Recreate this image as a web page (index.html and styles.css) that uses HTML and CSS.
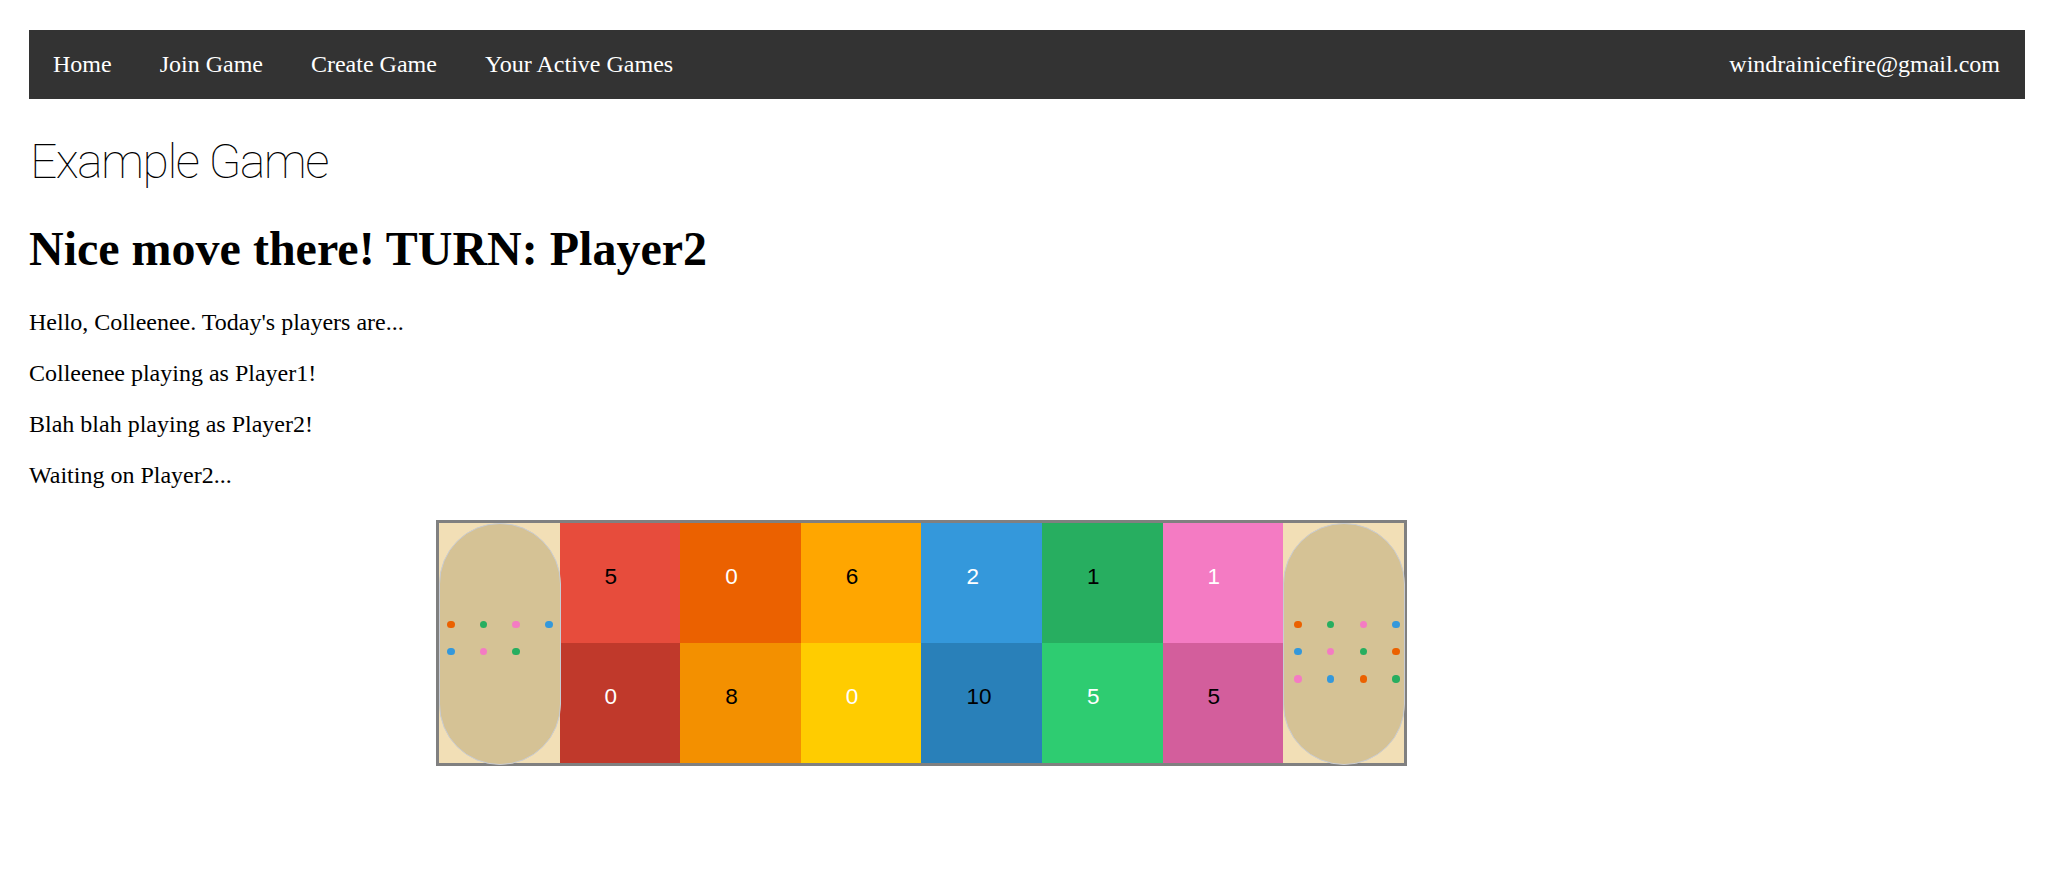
FILE: index.html
```html
<!DOCTYPE html>
<html lang="en">
<head>
<meta charset="utf-8">
<title>Example Game</title>
<link rel="stylesheet" href="styles.css">
</head>
<body>
<div class="page">
  <nav class="topnav">
    <div class="links">
      <a class="navlink" href="#">Home</a>
      <a class="navlink" href="#">Join Game</a>
      <a class="navlink" href="#">Create Game</a>
      <a class="navlink" href="#">Your Active Games</a>
    </div>
    <a class="navlink user" href="#">windrainicefire@gmail.com</a>
  </nav>

  <div class="title">Example Game</div>
  <h1 class="status">Nice move there! TURN: Player2</h1>
  <p class="msg">Hello, Colleenee. Today's players are...</p>
  <p class="msg">Colleenee playing as Player1!</p>
  <p class="msg">Blah blah playing as Player2!</p>
  <p class="msg">Waiting on Player2...</p>

  <div class="board-wrap">
    <div class="board">
      <div class="store">
        <div class="pill">
          <div class="dots dots-left">
            <span class="dot c-orange"></span><span class="dot c-green"></span><span class="dot c-pink"></span><span class="dot c-blue"></span>
            <span class="dot c-blue"></span><span class="dot c-pink"></span><span class="dot c-green"></span>
          </div>
        </div>
      </div>
      <div class="pits">
        <div class="pit p-red txt-dark">5</div>
        <div class="pit p-dorange txt-light">0</div>
        <div class="pit p-orange txt-dark">6</div>
        <div class="pit p-blue txt-light">2</div>
        <div class="pit p-green txt-dark">1</div>
        <div class="pit p-pink txt-light">1</div>
        <div class="pit p-red2 txt-light">0</div>
        <div class="pit p-orange2 txt-dark">8</div>
        <div class="pit p-yellow txt-light">0</div>
        <div class="pit p-blue2 txt-dark">10</div>
        <div class="pit p-green2 txt-light">5</div>
        <div class="pit p-pink2 txt-dark">5</div>
      </div>
      <div class="store">
        <div class="pill">
          <div class="dots dots-right">
            <span class="dot c-orange"></span><span class="dot c-green"></span><span class="dot c-pink"></span><span class="dot c-blue"></span>
            <span class="dot c-blue"></span><span class="dot c-pink"></span><span class="dot c-green"></span><span class="dot c-orange"></span>
            <span class="dot c-pink"></span><span class="dot c-blue"></span><span class="dot c-orange"></span><span class="dot c-green"></span>
          </div>
        </div>
      </div>
    </div>
  </div>
</div>
</body>
</html>
```

FILE: styles.css
```css
html, body {
  margin: 0;
  padding: 0;
  background: #ffffff;
}

body {
  font-family: "Liberation Serif", "Times New Roman", serif;
  font-size: 24px;
  color: #000;
}

.page {
  padding: 30px 23px 0 29px;
}

/* ---------- navigation ---------- */
.topnav {
  display: flex;
  justify-content: space-between;
  align-items: center;
  background: #333333;
}

.links {
  display: flex;
}

.navlink {
  display: block;
  padding: 21px 24px;
  line-height: 27px;
  font-size: 24px;
  color: #ffffff;
  text-decoration: none;
}

.user {
  padding-right: 25px;
}

/* ---------- headings / text ---------- */
.title {
  margin-top: 33px;
  height: 60px;
  line-height: 60px;
  font-family: "Roboto", "Inter", sans-serif;
  font-weight: 100;
  font-size: 48px;
  letter-spacing: -1.5px;
  padding-left: 1px;
}

.status {
  margin: 29px 0 33px;
  font-size: 48px;
  font-weight: bold;
}

.msg {
  margin: 24px 0;
}

/* ---------- board ---------- */
.board-wrap {
  margin-top: 31px;
  padding-left: 407px;
}

.board {
  display: inline-flex;
  border: 3px solid #808080;
  background: #f2dfb6;
}

.store {
  width: 120.6px;
  height: 240px;
  background: #f2dfb6;
  overflow: visible;
}

.pill {
  box-sizing: border-box;
  width: 122px;
  height: 242px;
  border: 1px solid #c9ccd2;
  border-radius: 61px;
  background: #d5c295;
  position: relative;
  z-index: 1;
}

.dots {
  display: flex;
  flex-wrap: wrap;
  width: 112px;
  gap: 19.8px 25.2px;
  padding-top: 96.5px;
}

.dots-left {
  padding-left: 7px;
}

.dots-right {
  padding-left: 10px;
}

.dot {
  width: 7.5px;
  height: 7.5px;
  border-radius: 50%;
}

.c-orange { background: #eb6100; }
.c-green  { background: #27ae60; }
.c-pink   { background: #f47bc3; }
.c-blue   { background: #3498db; }

.pits {
  display: grid;
  grid-template-columns: repeat(6, 120.6px);
  grid-template-rows: 120px 120px;
}

.pit {
  box-sizing: border-box;
  padding: 41px 0 0 45px;
  font-family: "Liberation Sans", Arial, sans-serif;
  font-size: 22.5px;
  line-height: 26px;
}

.txt-dark  { color: #000000; }
.txt-light { color: #ffffff; }

.p-red     { background: #e74c3c; }
.p-dorange { background: #eb6100; }
.p-orange  { background: #ffa600; }
.p-blue    { background: #3498db; }
.p-green   { background: #27ae60; }
.p-pink    { background: #f47bc3; }

.p-red2    { background: #c0392b; }
.p-orange2 { background: #f39000; }
.p-yellow  { background: #ffcc00; }
.p-blue2   { background: #2980b9; }
.p-green2  { background: #2ecc71; }
.p-pink2   { background: #d35e9c; }
```
